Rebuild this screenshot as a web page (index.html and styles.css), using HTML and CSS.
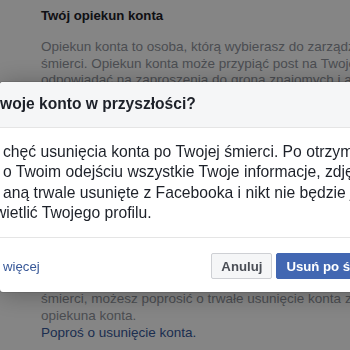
FILE: index.html
```html
<!DOCTYPE html>
<html lang="pl">
<head>
    <meta charset="UTF-8">
    <meta name="viewport" content="width=device-width, initial-scale=1.0">
    <title>Ustawienia upamiętniania</title>
    <link rel="stylesheet" href="styles.css">
</head>
<body>
    <div class="page">
        <section class="block">
            <h2 class="block-title">Twój opiekun konta</h2>
            <p class="block-text">
                Opiekun konta to osoba, którą wybierasz do zarządzania Twoim kontem po Twojej<br>
                śmierci. Opiekun konta może przypiąć post na Twojej osi czasu,<br>
                odpowiadać na zaproszenia do grona znajomych i aktualizować Twoje<br>
                zdjęcie profilowe oraz zdjęcie w tle.
            </p>
        </section>

        <section class="block block-delete">
            <h2 class="block-title">Usunięcie konta po śmierci</h2>
            <p class="block-text block-text-loose">
                Jeśli nie chcesz, aby Twoje konto na Facebooku zostało upamiętnione po Twojej<br>
                śmierci, możesz poprosić o trwałe usunięcie konta zamiast wybierać<br>
                opiekuna konta.
            </p>
            <a href="#" class="block-link">Poproś o usunięcie konta.</a>
        </section>
    </div>

    <div class="overlay"></div>

    <div class="dialog" role="dialog">
        <div class="dialog-header">woje konto w przyszłości?</div>
        <div class="dialog-body">
            chęć usunięcia konta po Twojej śmierci. Po otrzymaniu informacji<br>
            o Twoim odejściu wszystkie Twoje informacje, zdjęcia i posty<br>
            aną trwale usunięte z Facebooka i nikt nie będzie już mógł<br>
            <span class="cut">wietlić Twojego profilu.</span>
        </div>
        <div class="dialog-footer">
            <a href="#" class="more">więcej</a>
            <div class="actions">
                <button type="button" class="btn">Anuluj</button>
                <button type="button" class="btn btn-primary">Usuń po śmierci</button>
            </div>
        </div>
    </div>
</body>
</html>
```

FILE: styles.css
```css
html,
body {
    margin: 0;
    height: 100%;
    overflow: hidden;
}

body {
    font-family: "Liberation Sans", Arial, sans-serif;
    background-color: #fff;
    color: #1d2129;
}

.page {
    padding: 7px 0 0 41px;
    white-space: nowrap;
}

.block-title {
    margin: 0;
    font-size: 13.2px;
    line-height: 18px;
    font-weight: bold;
}

.block-text {
    margin: 14px 0 0;
    font-size: 13.5px;
    line-height: 16.5px;
    color: #90949c;
}

.block-text-loose {
    line-height: 17px;
}

.block-delete {
    margin-top: 136px;
}

.block-link {
    display: block;
    font-size: 13.5px;
    line-height: 17px;
    color: #365899;
    text-decoration: none;
}

.overlay {
    position: fixed;
    top: 0;
    right: 0;
    bottom: 0;
    left: 0;
    background-color: rgba(0, 0, 0, 0.48);
}

.dialog {
    position: fixed;
    top: 82px;
    left: 0;
    width: 412px;
    background-color: #fff;
    border-radius: 3px;
    box-shadow: 0 2px 26px rgba(0, 0, 0, 0.3), 0 0 0 1px rgba(0, 0, 0, 0.1);
    white-space: nowrap;
}

.dialog-header {
    background-color: #f5f6f7;
    border-bottom: 1px solid #e5e5e5;
    border-radius: 3px 3px 0 0;
    padding: 12px 0 13px;
    font-size: 15.6px;
    line-height: 20px;
    font-weight: bold;
}

.dialog-body {
    padding: 14px 0 14px 3px;
    font-size: 15.7px;
    line-height: 20.3px;
}

.cut {
    display: inline-block;
    margin-left: -8px;
}

.dialog-footer {
    display: flex;
    align-items: center;
    border-top: 1px solid #e5e5e5;
    padding: 15px 13px 13px 3px;
}

.more {
    color: #385898;
    font-size: 13.2px;
    text-decoration: none;
}

.actions {
    display: flex;
    gap: 4px;
    margin-left: auto;
}

.btn {
    font-family: "Liberation Sans", Arial, sans-serif;
    font-size: 13.2px;
    font-weight: bold;
    height: 26px;
    padding: 0 9px;
    border: 1px solid #ced0d4;
    border-radius: 2px;
    background-color: #f5f6f7;
    color: #4b4f56;
}

.btn-primary {
    background-color: #4267b2;
    border-color: #4267b2;
    color: #fff;
}
```
